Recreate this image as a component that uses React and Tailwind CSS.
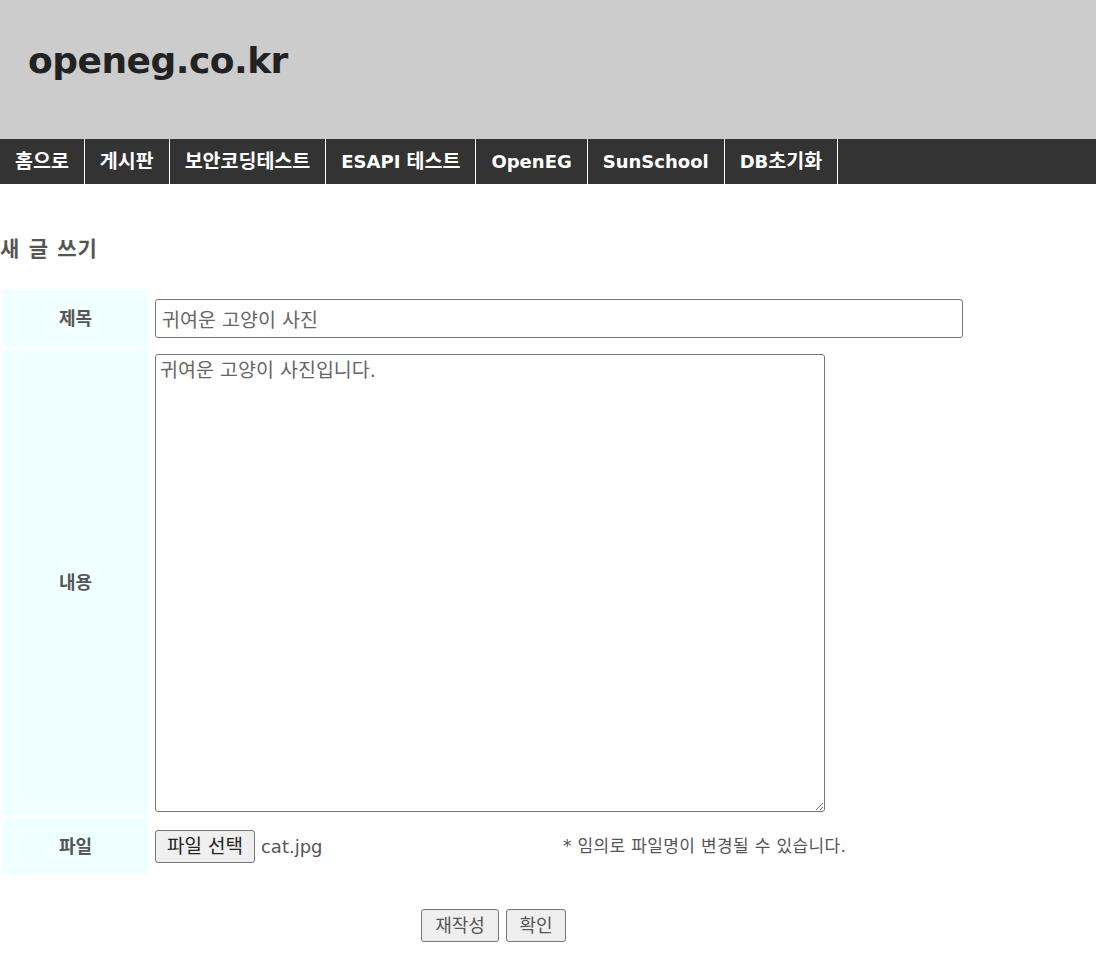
// nav items: [text, korean?] segments so Hangul can be sized like the original font
const menus = [
  [["홈으로", true]],
  [["게시판", true]],
  [["보안코딩테스트", true]],
  [["ESAPI ", false], ["테스트", true]],
  [["OpenEG", false]],
  [["SunSchool", false]],
  [["DB", false], ["초기화", true]],
];

export default function App() {
  return (
    <div className="min-h-[971px] bg-white text-[#555] font-['DejaVu_Sans','Noto_Sans_CJK_KR',sans-serif]">
      {/* header */}
      <div className="h-[139px] bg-[#cccccc] flex items-center px-[28px]">
        <h1 className="text-[36px] font-bold text-[#222] tracking-[-0.5px] -mt-[18px]">openeg.co.kr</h1>
      </div>

      {/* menu */}
      <div className="h-[45px] bg-[#333333] flex">
        {menus.map((m, i) => (
          <div key={i} className="h-full flex items-center px-[15px] border-r border-white text-white text-[18px] font-bold whitespace-pre">
            {m.map(([t, ko]) => (
              <span key={t} className={ko ? "text-[19.5px]" : ""}>{t}</span>
            ))}
          </div>
        ))}
      </div>

      <h2 className="mt-[50px] text-[21px] font-bold text-[#555] leading-[30px] tracking-[1px]">새 글 쓰기</h2>

      {/* form table */}
      <div className="mt-[25px] ml-[2px] grid grid-cols-[147px_1fr] gap-x-[3px] gap-y-[3px] text-[18px]">
        <div className="h-[58px] bg-[#f0ffff] flex items-center justify-center font-bold">제목</div>
        <div className="flex items-center pl-[3px]">
          <input
            defaultValue="귀여운 고양이 사진"
            className="w-[808px] h-[39px] border border-[#767676] rounded-[3px] px-[6px] text-[19.5px] text-[#666]"
          />
        </div>

        <div className="h-[465px] bg-[#f0ffff] flex items-center justify-center font-bold">내용</div>
        <div className="pl-[3px] pt-[4px]">
          <textarea
            defaultValue="귀여운 고양이 사진입니다."
            className="block w-[670px] h-[458px] border border-[#767676] rounded-[3px] px-[4px] py-[1px] text-[19.5px] text-[#666]"
          />
        </div>

        <div className="h-[57px] bg-[#f0ffff] flex items-center justify-center font-bold">파일</div>
        <div className="flex items-center pl-[3px]">
          <div className="flex items-center w-[408px]">
            <button className="h-[33px] px-[11px] bg-[#efefef] border border-[#767676] rounded-[3px] text-[19px] text-[#222]">파일 선택</button>
            <span className="ml-[6px] text-[18px] text-[#555]">cat.jpg</span>
          </div>
          <span className="text-[17px] tracking-[0.35px] text-[#555]">* 임의로 파일명이 변경될 수 있습니다.</span>
        </div>
      </div>

      <div className="mt-[34px] flex gap-[7px] pl-[421px]">
        <button className="h-[33px] w-[78px] bg-[#efefef] border border-[#767676] rounded-[3px] text-[18px] text-[#555]">재작성</button>
        <button className="h-[33px] w-[60px] bg-[#efefef] border border-[#767676] rounded-[3px] text-[18px] text-[#555]">확인</button>
      </div>
    </div>
  );
}
